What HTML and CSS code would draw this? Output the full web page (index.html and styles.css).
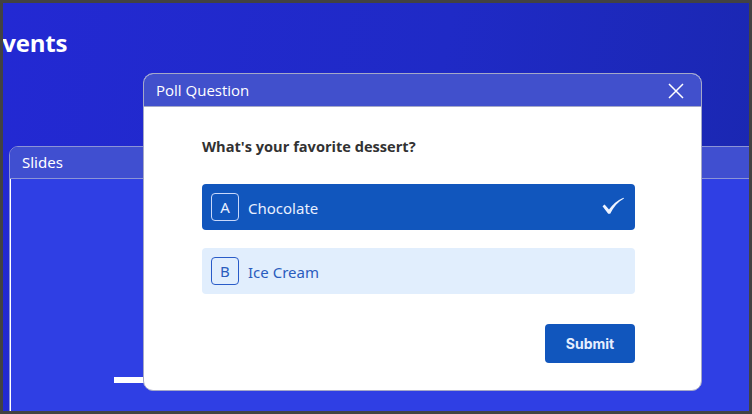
FILE: index.html
```html
<!DOCTYPE html>
<html>
<head>
<meta charset="utf-8">
<link rel="stylesheet" href="styles.css">
</head>
<body>
<div class="frame">
  <h1 class="page-title">Events</h1>
  <section class="slides">
    <div class="slides-head">Slides</div>
    <div class="slides-body">
      <div class="slide-bar"></div>
    </div>
  </section>

  <div class="dialog">
    <div class="dialog-head">
      <span class="dialog-title">Poll Question</span>
      <svg class="close" width="18" height="18" viewBox="0 0 18 18"><path d="M2 2 L16 16 M16 2 L2 16" stroke="#fff" stroke-width="1.5" fill="none"/></svg>
    </div>
    <div class="dialog-body">
      <div class="question">What's your favorite dessert?</div>
      <div class="option selected">
        <span class="letter">A</span>
        <span class="label">Chocolate</span>
        <svg class="check" width="24" height="18" viewBox="0 0 24 18"><path d="M1.5 9.2 L3.6 7.6 L8 12.6 C11.5 7.6 16 3.2 22.5 0.8 L23 1.6 C17 5 12.5 10 9.2 16.8 L7.2 16.8 Z" fill="#eef3ff"/></svg>
      </div>
      <div class="option">
        <span class="letter">B</span>
        <span class="label">Ice Cream</span>
      </div>
      <div class="actions">
        <button class="submit">Submit</button>
      </div>
    </div>
  </div>
</div>
</body>
</html>
```

FILE: styles.css
```css
* { box-sizing: border-box; }
html, body { margin: 0; padding: 0; }
body { width: 752px; height: 414px; overflow: hidden; background: #424242; }

.frame {
  position: relative;
  width: 752px;
  height: 414px;
  border: 3px solid #424242;
  background: linear-gradient(100deg, #2329d3 0%, #1f2ac6 55%, #1a27b0 100%);
  overflow: hidden;
  font-family: "Noto Sans", "Open Sans", sans-serif;
}

.page-title {
  margin: 0;
  padding-top: 24px;
  height: 143px;
  margin-left: -14px;
  font-family: "Open Sans", "Noto Sans", sans-serif;
  font-weight: 700;
  font-size: 24px;
  line-height: 32px;
  color: #ffffff;
  letter-spacing: -0.2px;
}

.slides {
  margin-left: 6px;
  width: 760px;
  height: 280px;
  border: 1px solid #8c94d6;
  border-radius: 9px 0 0 0;
  overflow: hidden;
}

.slides-head {
  height: 32px;
  padding-left: 12px;
  background: #404fd0;
  color: #ffffff;
  font-size: 15px;
  line-height: 31px;
  border-bottom: 1px solid #8c94d6;
}

.slides-body {
  position: relative;
  height: 100%;
  background: #2f3fe4;
  border-left: 1px solid #ffffff;
}

.slide-bar {
  position: absolute;
  left: 103px;
  top: 198px;
  width: 60px;
  height: 6px;
  background: #ffffff;
}

.dialog {
  position: absolute;
  left: 140px;
  top: 70px;
  width: 559px;
  height: 318px;
  border: 1px solid #a4a8c8;
  border-radius: 10px;
  background: #ffffff;
  overflow: hidden;
}

.dialog-head {
  display: flex;
  align-items: center;
  justify-content: space-between;
  height: 33px;
  padding: 0 16px 0 12px;
  background: #4150cc;
  border-bottom: 1px solid #a4a8c8;
  color: #ffffff;
}

.dialog-title {
  font-family: "Open Sans", "Noto Sans", sans-serif;
  font-size: 15px;
  line-height: 20px;
  margin-top: -1px;
}

.close { display: block; margin-top: 1px; }

.dialog-body {
  padding: 29px 66px 0 58px;
}

.question {
  font-family: "Open Sans", "Noto Sans", sans-serif;
  font-weight: 700;
  font-size: 14.6px;
  line-height: 20px;
  color: #323232;
  margin-bottom: 28px;
}

.option {
  display: flex;
  align-items: center;
  height: 46px;
  padding: 0 9px;
  margin-bottom: 18px;
  border-radius: 4px;
  background: #e1eefd;
  color: #2a5cbd;
}

.option.selected {
  background: #1156bd;
  color: #e8efff;
}

.letter {
  display: flex;
  align-items: center;
  justify-content: center;
  width: 28px;
  height: 28px;
  margin-right: 9px;
  border: 1px solid #2a5cc8;
  border-radius: 4px;
  font-size: 15px;
}

.option.selected .letter { border-color: #c8d8fb; }

.label {
  flex: 1;
  font-size: 15px;
  line-height: 20px;
  padding-top: 2px;
}

.check { display: block; margin-right: 1px; margin-top: -2px; }

.actions {
  display: flex;
  justify-content: flex-end;
  padding-top: 12px;
}

.submit {
  width: 90px;
  height: 39px;
  border: none;
  border-radius: 4px;
  background: #1156bd;
  color: #e6eeff;
  font-family: "Inter", "Roboto", sans-serif;
  font-weight: 700;
  font-size: 14px;
  padding: 0;
}
```
